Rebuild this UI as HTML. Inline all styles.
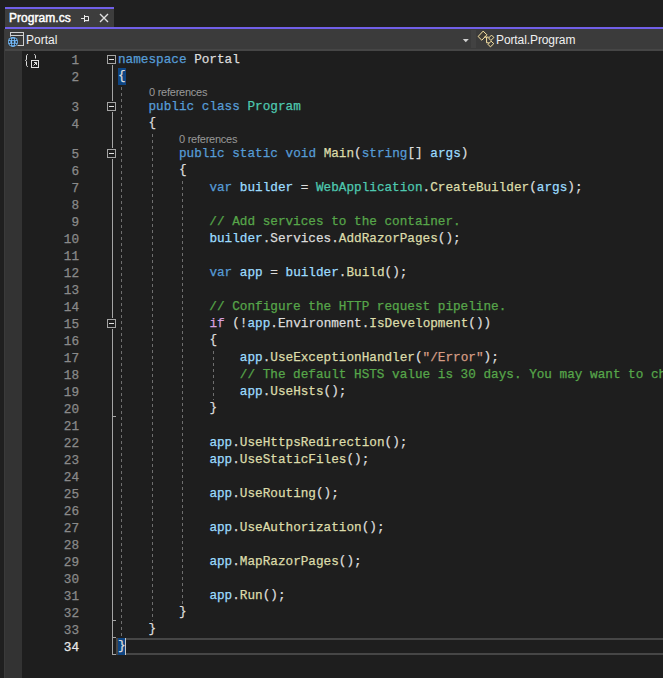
<!DOCTYPE html>
<html><head><meta charset="utf-8"><style>
html,body{margin:0;padding:0;overflow:hidden;}
body{width:663px;height:678px;overflow:hidden;background:#1f1f1f;position:relative;font-family:"Liberation Sans",sans-serif;}
.a{position:absolute;}
.code{position:absolute;left:118.00px;white-space:pre;font-family:"Liberation Mono",monospace;font-size:12.70px;line-height:17px;height:17px;letter-spacing:0.000px;-webkit-text-stroke:0.25px currentColor;}
.ln{position:absolute;left:40px;width:39px;text-align:right;white-space:pre;font-family:"Liberation Mono",monospace;font-size:12.70px;line-height:17px;height:17px;color:#8a8a8a;letter-spacing:0.000px;-webkit-text-stroke:0.25px currentColor;}
.lens{position:absolute;font-size:11px;line-height:13px;height:13px;color:#999999;white-space:pre;letter-spacing:-0.25px;}
.kw{color:#569cd6}.ctl{color:#d8a0df}.ty{color:#4ec9b0}.fn{color:#dcdcaa}.var{color:#9cdcfe}.txt{color:#dcdcdc}.cm{color:#57a64a}.str{color:#d69d85}.pun{color:#dcdcdc}
.bm{color:#dcdcdc;background:#0e4583;display:inline-block;height:17px;vertical-align:top;}
.br{position:relative;top:-1px;}
</style></head><body>

<div class="a" style="left:5px;top:7px;width:109px;height:2px;background:#7160e8"></div>
<div class="a" style="left:5px;top:9px;width:109px;height:18px;background:#3d3d3d"></div>
<div class="a" style="left:9px;top:9px;height:18px;line-height:18px;font-size:12px;font-weight:normal;letter-spacing:0.05px;-webkit-text-stroke:0.45px #ffffff;color:#ffffff">Program.cs</div>
<svg class="a" style="left:80px;top:14px" width="10" height="9" viewBox="0 0 10 9"><path d="M1 4.5H4M4.5 1V8M4.5 2.5H8.5V6.5H4.5" stroke="#e8e8e8" stroke-width="1" fill="none"/><path d="M4.5 6H9V7.2H4.5Z" fill="#e8e8e8"/></svg>
<svg class="a" style="left:99px;top:13px" width="10" height="10" viewBox="0 0 10 10"><path d="M1 1L9 9M9 1L1 9" stroke="#e0e0e0" stroke-width="1.35" fill="none"/></svg>
<div class="a" style="left:5px;top:27px;width:658px;height:2px;background:#7160e8"></div>
<div class="a" style="left:5px;top:29px;width:658px;height:20px;background:#3b3b3b"></div>
<div class="a" style="left:5px;top:49px;width:658px;height:2px;background:#464646"></div>
<div class="a" style="left:471px;top:30px;width:5px;height:18px;background:#424242"></div>
<svg class="a" style="left:8px;top:31px" width="18" height="16" viewBox="0 0 18 16"><rect x="2.5" y="1.5" width="13" height="13" fill="none" stroke="#d0d0d0"/><path d="M2.5 4.5H15.5" stroke="#d0d0d0"/></svg>
<svg class="a" style="left:0px;top:30px" width="24" height="20" viewBox="0 30 24 20"><circle cx="12.95" cy="41.9" r="5.9" fill="#333"/><circle cx="12.95" cy="41.9" r="5" fill="#75beff"/><g fill="#262626"><rect x="9.7" y="38.6" width="1.5" height="1.6"/><rect x="9.7" y="43.7" width="1.5" height="1.6"/><rect x="12.1" y="38.6" width="1.8" height="1.6"/><rect x="12.1" y="43.7" width="1.8" height="1.6"/><rect x="14.8" y="38.6" width="1.5" height="1.6"/><rect x="14.8" y="43.7" width="1.5" height="1.6"/><rect x="8.8" y="41.1" width="1.6" height="1.7"/><rect x="12.1" y="41.1" width="1.8" height="1.7"/><rect x="15.5" y="41.1" width="1.6" height="1.7"/></g></svg>
<div class="a" style="left:26px;top:30px;height:20px;line-height:20px;font-size:12px;color:#f0f0f0">Portal</div>
<svg class="a" style="left:462px;top:39px" width="8" height="4" viewBox="0 0 8 4"><path d="M0.8 0H6.8L3.8 3.2Z" fill="#d0d0d0"/></svg>
<svg class="a" style="left:476px;top:29px" width="22" height="20" viewBox="0 0 22 20"><path d="M2.1 7.5L7.2 2.1L10.9 5.8L5.8 11.2Z" fill="#403c34" stroke="#fde7a6" stroke-width="1"/><path d="M12.6 9L15.5 6.1L17.9 8.5L14.8 11.5Z" fill="#3b3b3b" stroke="#fde7a6" stroke-width="1"/><path d="M12 15.3L15.1 12.2L17.8 14.6L14.4 17.9Z" fill="#3b3b3b" stroke="#fde7a6" stroke-width="1"/><path d="M8.3 8.1H12.6M10.6 8.1V13.8H12.8" fill="none" stroke="#fde7a6" stroke-width="1"/></svg>
<div class="a" style="left:496px;top:30px;height:20px;line-height:20px;font-size:12px;letter-spacing:-0.1px;color:#f0f0f0">Portal.Program</div>
<div class="a" style="left:4px;top:29px;width:1px;height:649px;background:#3a3a3a"></div>
<div class="a" style="left:5px;top:51px;width:17px;height:627px;background:#333333"></div>
<div class="a" style="left:22px;top:51px;width:641px;height:627px;background:#1e1e1e"></div>
<svg class="a" style="left:22px;top:51px" width="20" height="20" viewBox="0 0 20 20"><g fill="none" stroke="#e0e0e0" stroke-width="1"><path d="M6 3.5C5 3.5 4.5 4 4.5 5V8C4.5 9 4 9.5 3.5 9.5C4 9.5 4.5 10 4.5 11V14C4.5 15 5 15.5 6 15.5"/><path d="M12 3.5C13 3.5 13.5 4 13.5 5V7.5"/><rect x="9.5" y="9.5" width="7" height="7"/><path d="M11.5 14.5L14.5 11.5M12 11.5H14.5V14"/></g></svg>
<div class="a" style="left:116px;top:638px;width:560px;height:13px;border:2px solid #464646"></div>
<div class="a" style="left:112px;top:65px;width:1px;height:36px;background:#a5a5a5"></div>
<div class="a" style="left:112px;top:112px;width:1px;height:36px;background:#a5a5a5"></div>
<div class="a" style="left:112px;top:159px;width:1px;height:159px;background:#a5a5a5"></div>
<div class="a" style="left:112px;top:329px;width:1px;height:326px;background:#a5a5a5"></div>
<div class="a" style="left:107px;top:55px;width:7px;height:7px;border:1px solid #a5a5a5"></div>
<div class="a" style="left:109px;top:59px;width:5px;height:1px;background:#e0e0e0"></div>
<div class="a" style="left:107px;top:102px;width:7px;height:7px;border:1px solid #a5a5a5"></div>
<div class="a" style="left:109px;top:106px;width:5px;height:1px;background:#e0e0e0"></div>
<div class="a" style="left:107px;top:149px;width:7px;height:7px;border:1px solid #a5a5a5"></div>
<div class="a" style="left:109px;top:153px;width:5px;height:1px;background:#e0e0e0"></div>
<div class="a" style="left:107px;top:319px;width:7px;height:7px;border:1px solid #a5a5a5"></div>
<div class="a" style="left:109px;top:323px;width:5px;height:1px;background:#e0e0e0"></div>
<div class="a" style="left:112px;top:416px;width:4px;height:1px;background:#a5a5a5"></div>
<div class="a" style="left:112px;top:620px;width:4px;height:1px;background:#a5a5a5"></div>
<div class="a" style="left:112px;top:637px;width:4px;height:1px;background:#a5a5a5"></div>
<div class="a" style="left:112px;top:654px;width:4px;height:1px;background:#a5a5a5"></div>
<div class="a" style="left:121px;top:85px;width:1px;height:553px;background:repeating-linear-gradient(to bottom,transparent 0,transparent 2px,#6e6e6e 2px,#6e6e6e 5px,transparent 5px,transparent 6px)"></div>
<div class="a" style="left:152px;top:132px;width:1px;height:489px;background:repeating-linear-gradient(to bottom,transparent 0,transparent 2px,#6e6e6e 2px,#6e6e6e 5px,transparent 5px,transparent 6px)"></div>
<div class="a" style="left:182px;top:179px;width:1px;height:425px;background:repeating-linear-gradient(to bottom,transparent 0,transparent 2px,#6e6e6e 2px,#6e6e6e 5px,transparent 5px,transparent 6px)"></div>
<div class="a" style="left:213px;top:349px;width:1px;height:51px;background:repeating-linear-gradient(to bottom,transparent 0,transparent 2px,#6e6e6e 2px,#6e6e6e 5px,transparent 5px,transparent 6px)"></div>
<div class="ln" style="top:52px;color:#8a8a8a">1</div>
<div class="ln" style="top:69px;color:#8a8a8a">2</div>
<div class="ln" style="top:99px;color:#8a8a8a">3</div>
<div class="ln" style="top:116px;color:#8a8a8a">4</div>
<div class="ln" style="top:146px;color:#8a8a8a">5</div>
<div class="ln" style="top:163px;color:#8a8a8a">6</div>
<div class="ln" style="top:180px;color:#8a8a8a">7</div>
<div class="ln" style="top:197px;color:#8a8a8a">8</div>
<div class="ln" style="top:214px;color:#8a8a8a">9</div>
<div class="ln" style="top:231px;color:#8a8a8a">10</div>
<div class="ln" style="top:248px;color:#8a8a8a">11</div>
<div class="ln" style="top:265px;color:#8a8a8a">12</div>
<div class="ln" style="top:282px;color:#8a8a8a">13</div>
<div class="ln" style="top:299px;color:#8a8a8a">14</div>
<div class="ln" style="top:316px;color:#8a8a8a">15</div>
<div class="ln" style="top:333px;color:#8a8a8a">16</div>
<div class="ln" style="top:350px;color:#8a8a8a">17</div>
<div class="ln" style="top:367px;color:#8a8a8a">18</div>
<div class="ln" style="top:384px;color:#8a8a8a">19</div>
<div class="ln" style="top:401px;color:#8a8a8a">20</div>
<div class="ln" style="top:418px;color:#8a8a8a">21</div>
<div class="ln" style="top:435px;color:#8a8a8a">22</div>
<div class="ln" style="top:452px;color:#8a8a8a">23</div>
<div class="ln" style="top:469px;color:#8a8a8a">24</div>
<div class="ln" style="top:486px;color:#8a8a8a">25</div>
<div class="ln" style="top:503px;color:#8a8a8a">26</div>
<div class="ln" style="top:520px;color:#8a8a8a">27</div>
<div class="ln" style="top:537px;color:#8a8a8a">28</div>
<div class="ln" style="top:554px;color:#8a8a8a">29</div>
<div class="ln" style="top:571px;color:#8a8a8a">30</div>
<div class="ln" style="top:588px;color:#8a8a8a">31</div>
<div class="ln" style="top:605px;color:#8a8a8a">32</div>
<div class="ln" style="top:622px;color:#8a8a8a">33</div>
<div class="ln" style="top:639px;color:#e8e8e8">34</div>
<div class="lens" style="left:149px;top:86px">0 references</div>
<div class="lens" style="left:179px;top:133px">0 references</div>
<div class="code" style="top:51px"><span class="kw">namespace</span><span class="txt"> Portal</span></div>
<div class="code" style="top:68px"><span class="bm"><span class="br">{</span></span></div>
<div class="code" style="top:98px"><span class="txt">    </span><span class="kw">public</span><span class="txt"> </span><span class="kw">class</span><span class="txt"> </span><span class="ty">Program</span></div>
<div class="code" style="top:115px"><span class="pun">    <span class="br">{</span></span></div>
<div class="code" style="top:145px"><span class="txt">        </span><span class="kw">public</span><span class="txt"> </span><span class="kw">static</span><span class="txt"> </span><span class="kw">void</span><span class="txt"> </span><span class="fn">Main</span><span class="pun"><span class="br">(</span></span><span class="kw">string</span><span class="pun"><span class="br">[</span><span class="br">]</span> </span><span class="var">args</span><span class="pun"><span class="br">)</span></span></div>
<div class="code" style="top:162px"><span class="pun">        <span class="br">{</span></span></div>
<div class="code" style="top:179px"><span class="txt">            </span><span class="kw">var</span><span class="txt"> </span><span class="var">builder</span><span class="pun"> = </span><span class="ty">WebApplication</span><span class="pun">.</span><span class="fn">CreateBuilder</span><span class="pun"><span class="br">(</span></span><span class="var">args</span><span class="pun"><span class="br">)</span>;</span></div>
<div class="code" style="top:213px"><span class="cm">            // Add services to the container.</span></div>
<div class="code" style="top:230px"><span class="txt">            </span><span class="var">builder</span><span class="pun">.</span><span class="txt">Services</span><span class="pun">.</span><span class="fn">AddRazorPages</span><span class="pun"><span class="br">(</span><span class="br">)</span>;</span></div>
<div class="code" style="top:264px"><span class="txt">            </span><span class="kw">var</span><span class="txt"> </span><span class="var">app</span><span class="pun"> = </span><span class="var">builder</span><span class="pun">.</span><span class="fn">Build</span><span class="pun"><span class="br">(</span><span class="br">)</span>;</span></div>
<div class="code" style="top:298px"><span class="cm">            // Configure the HTTP request pipeline.</span></div>
<div class="code" style="top:315px"><span class="txt">            </span><span class="ctl">if</span><span class="pun"> <span class="br">(</span>!</span><span class="var">app</span><span class="pun">.</span><span class="txt">Environment</span><span class="pun">.</span><span class="fn">IsDevelopment</span><span class="pun"><span class="br">(</span><span class="br">)</span><span class="br">)</span></span></div>
<div class="code" style="top:332px"><span class="pun">            <span class="br">{</span></span></div>
<div class="code" style="top:349px"><span class="txt">                </span><span class="var">app</span><span class="pun">.</span><span class="fn">UseExceptionHandler</span><span class="pun"><span class="br">(</span></span><span class="str">&quot;/Error&quot;</span><span class="pun"><span class="br">)</span>;</span></div>
<div class="code" style="top:366px"><span class="cm">                // The default HSTS value is 30 days. You may want to change this for production scenarios.</span></div>
<div class="code" style="top:383px"><span class="txt">                </span><span class="var">app</span><span class="pun">.</span><span class="fn">UseHsts</span><span class="pun"><span class="br">(</span><span class="br">)</span>;</span></div>
<div class="code" style="top:400px"><span class="pun">            <span class="br">}</span></span></div>
<div class="code" style="top:434px"><span class="txt">            </span><span class="var">app</span><span class="pun">.</span><span class="fn">UseHttpsRedirection</span><span class="pun"><span class="br">(</span><span class="br">)</span>;</span></div>
<div class="code" style="top:451px"><span class="txt">            </span><span class="var">app</span><span class="pun">.</span><span class="fn">UseStaticFiles</span><span class="pun"><span class="br">(</span><span class="br">)</span>;</span></div>
<div class="code" style="top:485px"><span class="txt">            </span><span class="var">app</span><span class="pun">.</span><span class="fn">UseRouting</span><span class="pun"><span class="br">(</span><span class="br">)</span>;</span></div>
<div class="code" style="top:519px"><span class="txt">            </span><span class="var">app</span><span class="pun">.</span><span class="fn">UseAuthorization</span><span class="pun"><span class="br">(</span><span class="br">)</span>;</span></div>
<div class="code" style="top:553px"><span class="txt">            </span><span class="var">app</span><span class="pun">.</span><span class="fn">MapRazorPages</span><span class="pun"><span class="br">(</span><span class="br">)</span>;</span></div>
<div class="code" style="top:587px"><span class="txt">            </span><span class="var">app</span><span class="pun">.</span><span class="fn">Run</span><span class="pun"><span class="br">(</span><span class="br">)</span>;</span></div>
<div class="code" style="top:604px"><span class="pun">        <span class="br">}</span></span></div>
<div class="code" style="top:621px"><span class="pun">    <span class="br">}</span></span></div>
<div class="code" style="top:638px"><span class="bm"><span class="br">}</span></span></div>
<div class="a" style="left:125px;top:638px;width:1px;height:17px;background:#c8c8c8"></div>
</body></html>
